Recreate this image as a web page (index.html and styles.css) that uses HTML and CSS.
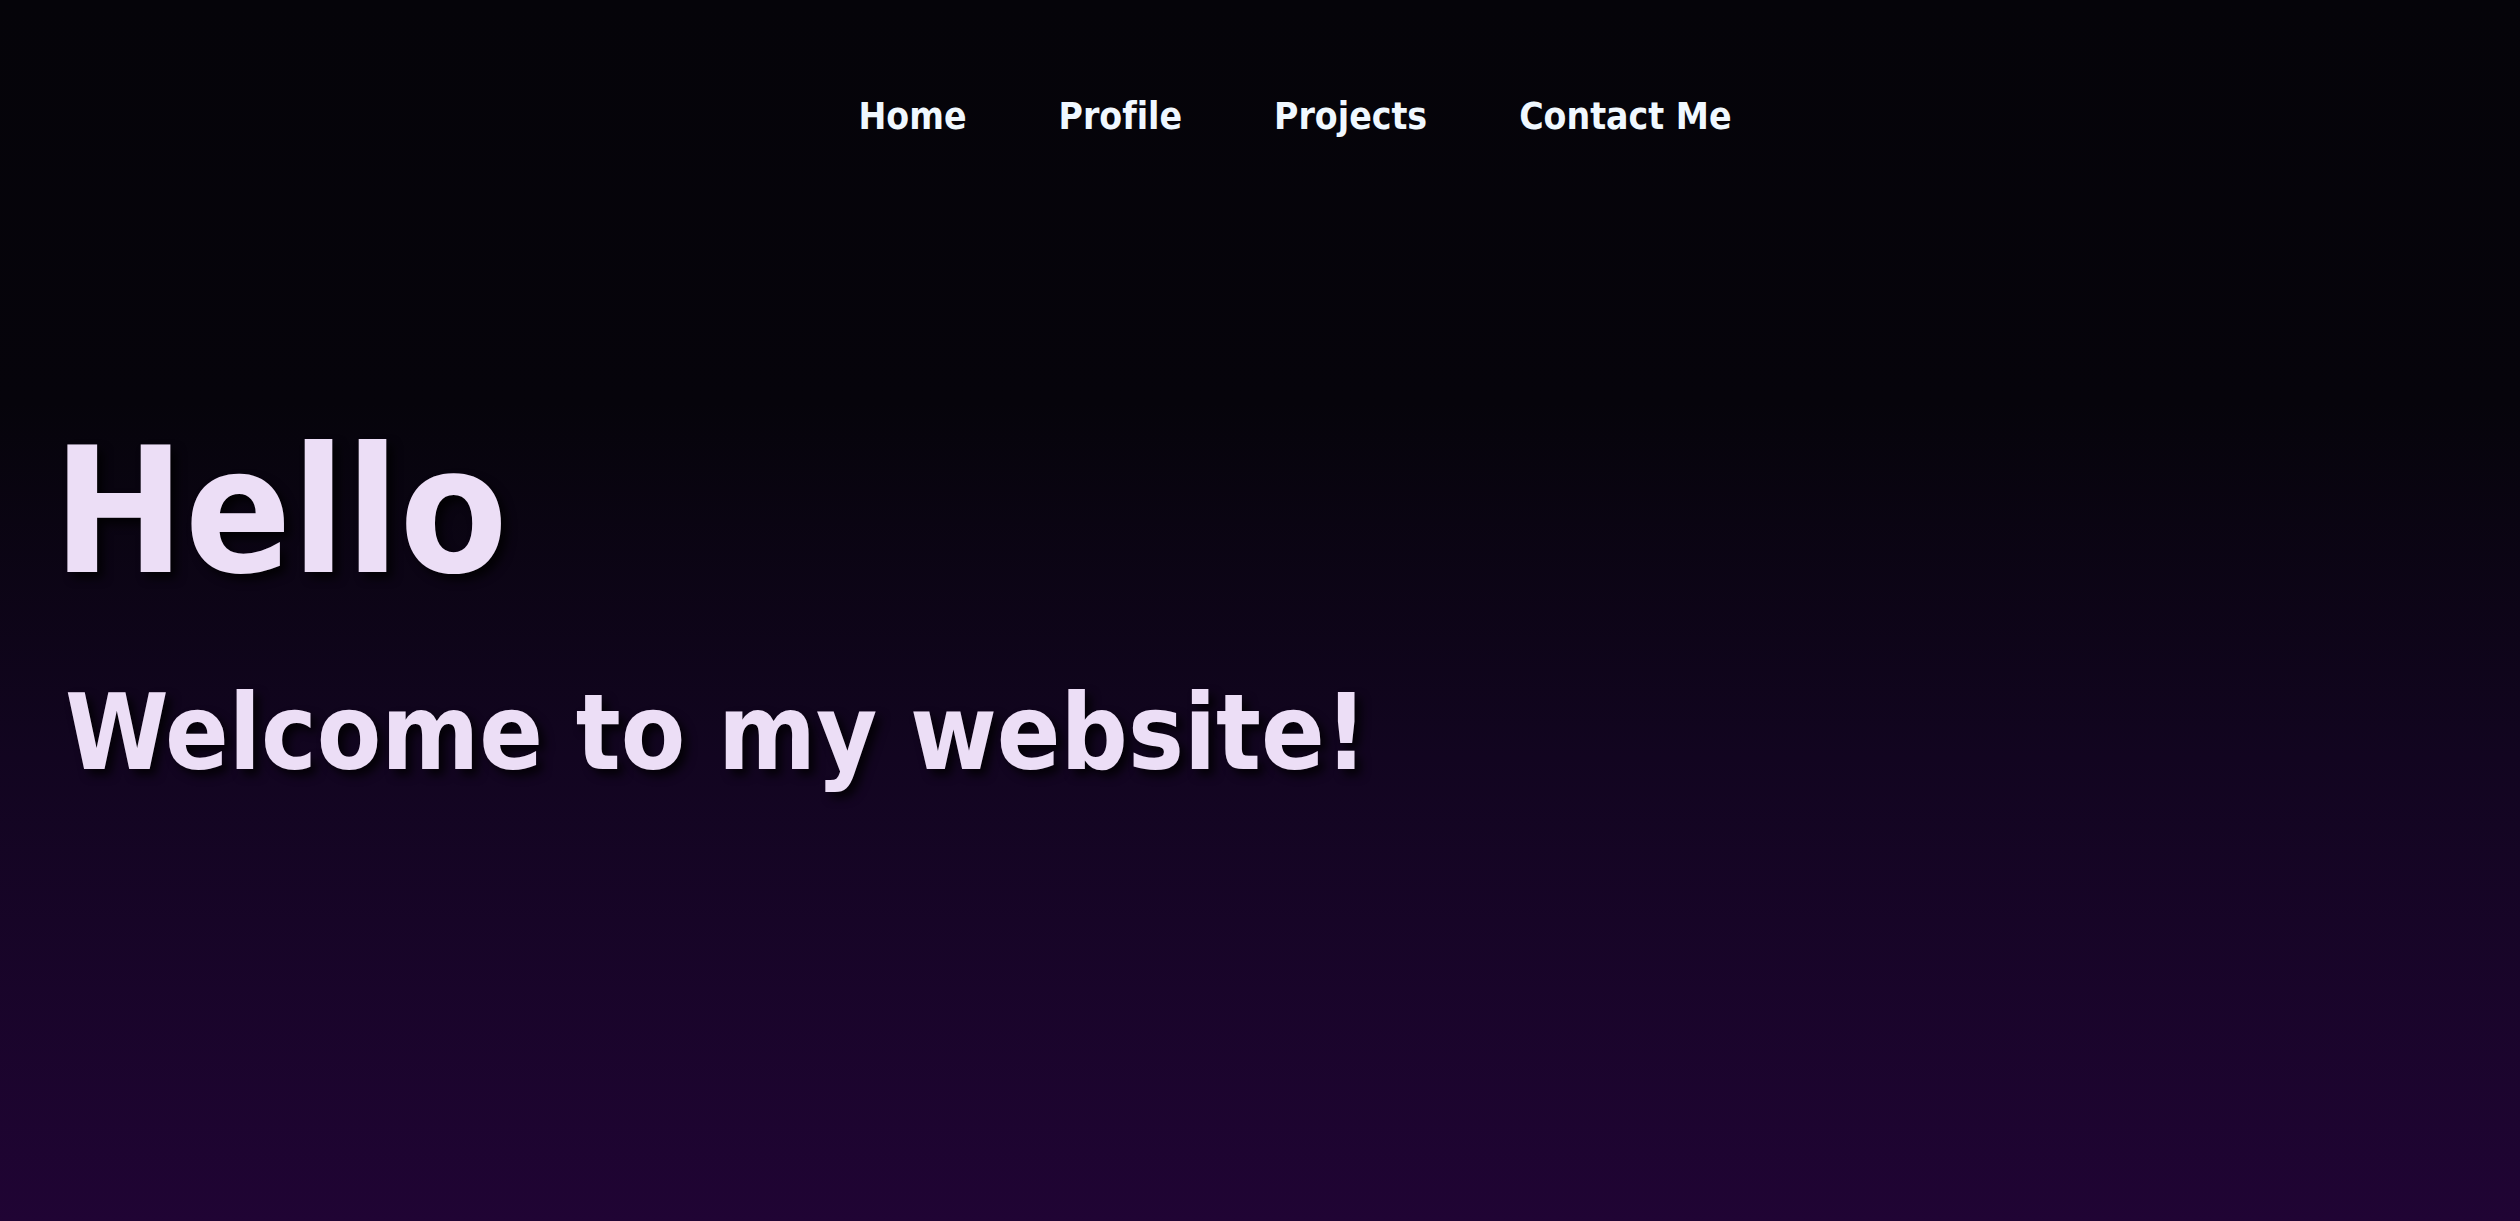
FILE: index.html
```html
<!DOCTYPE html>
<html lang="en">
<head>
<meta charset="utf-8">
<title>Hello</title>
<link rel="stylesheet" href="styles.css">
</head>
<body>
<header class="site-header">
  <nav class="nav">
    <a class="nav-link" href="#">Home</a>
    <a class="nav-link" href="#">Profile</a>
    <a class="nav-link" href="#">Projects</a>
    <a class="nav-link" href="#">Contact Me</a>
  </nav>
</header>
<main class="hero">
  <h1 class="hero-title">Hello</h1>
  <h2 class="hero-subtitle">Welcome to my website!</h2>
</main>
</body>
</html>
```
FILE: styles.css
```css
html, body {
  margin: 0;
  padding: 0;
  height: 100%;
}
body {
  min-height: 1221px;
  background: linear-gradient(180deg, #050409 0%, #06040b 33%, #120520 62%, #200434 100%);
  font-family: "DejaVu Sans", Verdana, sans-serif;
  font-stretch: condensed;
  font-variant-ligatures: none;
  overflow: hidden;
}
.site-header {
  padding-top: 95px;
}
.nav {
  display: flex;
  justify-content: center;
  gap: 92px;
  padding-left: 70px;
}
.nav-link {
  color: #f0f8ff;
  text-decoration: none;
  font-weight: bold;
  font-size: 37px;
  line-height: 44px;
}
.hero {
  padding: 285px 0 0 53px;
}
.hero-title {
  margin: 0;
  font-size: 175px;
  line-height: 1;
  font-weight: bold;
  color: #ecdef6;
  text-shadow: 6px 6px 10px rgba(0, 0, 0, 0.8);
}
.hero-subtitle {
  margin: 82px 0 0 12px;
  font-size: 104.5px;
  line-height: 1;
  font-weight: bold;
  color: #ecdef6;
  text-shadow: 6px 6px 10px rgba(0, 0, 0, 0.8);
}
```
